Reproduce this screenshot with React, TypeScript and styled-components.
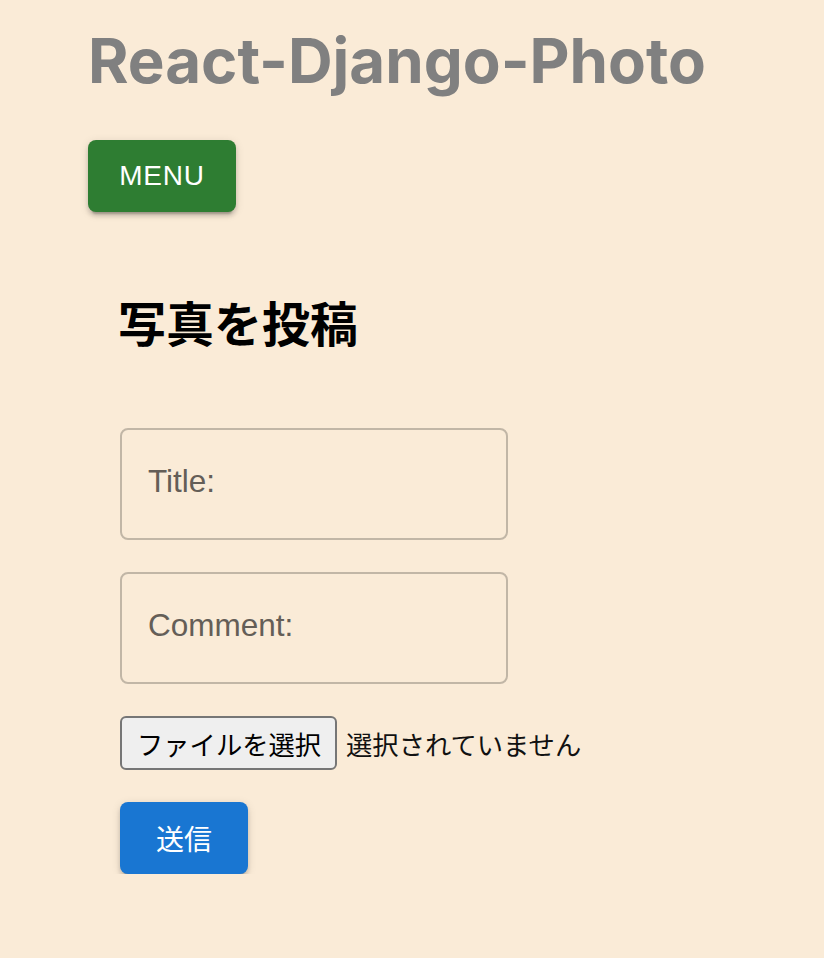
import styled, { createGlobalStyle } from "styled-components";

const GlobalStyle = createGlobalStyle`
  body {
    margin: 0;
    background-color: #faebd7;
    font-family: "Liberation Sans", Arial, sans-serif;
  }
`;

const Page = styled.div`
  padding: 25px 0 0 88px;
`;

const SiteTitle = styled.h1`
  margin: 0;
  font-family: Inter, "Liberation Sans", sans-serif;
  font-size: 61.8px;
  line-height: 72px;
  font-weight: 700;
  color: #808080;
`;

const Button = styled.button<{ $color: string }>`
  display: inline-flex;
  align-items: center;
  justify-content: center;
  min-width: 128px;
  height: 72px;
  padding: 0 32px;
  border: none;
  border-radius: 8px;
  background-color: ${(p) => p.$color};
  color: #fff;
  font-size: 28px;
  letter-spacing: 0.8px;
  font-family: "Liberation Sans", "Noto Sans CJK JP", sans-serif;
  box-shadow: 0px 6px 2px -4px rgba(0, 0, 0, 0.2),
    0px 4px 4px 0px rgba(0, 0, 0, 0.14), 0px 2px 10px 0px rgba(0, 0, 0, 0.12);
  cursor: pointer;
`;

const MenuButton = styled(Button)`
  margin-top: 43px;
  width: 148px;
`;

const PostForm = styled.form`
  display: flex;
  flex-direction: column;
  align-items: flex-start;
  padding: 80px 32px 0;
`;

const Heading = styled.h2`
  margin: 0 0 78px -2px;
  font-family: "Noto Sans CJK JP", sans-serif;
  font-size: 48px;
  line-height: 58px;
  font-weight: 700;
  color: #000;
`;

const Field = styled.input`
  box-sizing: border-box;
  width: 388px;
  height: 112px;
  margin-bottom: 32px;
  padding: 0 26px 6px;
  border: 2px solid #c1b6a6;
  border-radius: 8px;
  background: transparent;
  font-family: "Liberation Sans", Arial, sans-serif;
  font-size: 31.5px;
  color: #222;
  outline: none;

  &::placeholder {
    color: #645e57;
  }
`;

const FileRow = styled.div`
  display: flex;
  align-items: center;
  gap: 9px;
  font-family: "Noto Sans CJK JP", sans-serif;
  font-size: 26.3px;
  color: #111;
`;

const FileButton = styled.label`
  box-sizing: border-box;
  display: inline-flex;
  align-items: center;
  height: 54px;
  padding: 0 14px 0 15px;
  border: 2px solid #767676;
  border-radius: 6px;
  background-color: #efefef;
  color: #000;
  cursor: pointer;
`;

const SubmitButton = styled(Button)`
  margin-top: 32px;
  font-family: "Noto Sans CJK JP", sans-serif;
  letter-spacing: 0;
`;

const App = () => {
  return (
    <>
      <GlobalStyle />
      <Page>
        <SiteTitle>React-Django-Photo</SiteTitle>
        <MenuButton $color="#2e7d32">MENU</MenuButton>
        <PostForm onSubmit={(e) => e.preventDefault()}>
          <Heading>写真を投稿</Heading>
          <Field placeholder="Title:" />
          <Field placeholder="Comment:" />
          <FileRow>
            <FileButton>ファイルを選択</FileButton>
            <span>選択されていません</span>
          </FileRow>
          <SubmitButton $color="#1976d2" type="submit">
            送信
          </SubmitButton>
        </PostForm>
      </Page>
    </>
  );
};

export default App;
